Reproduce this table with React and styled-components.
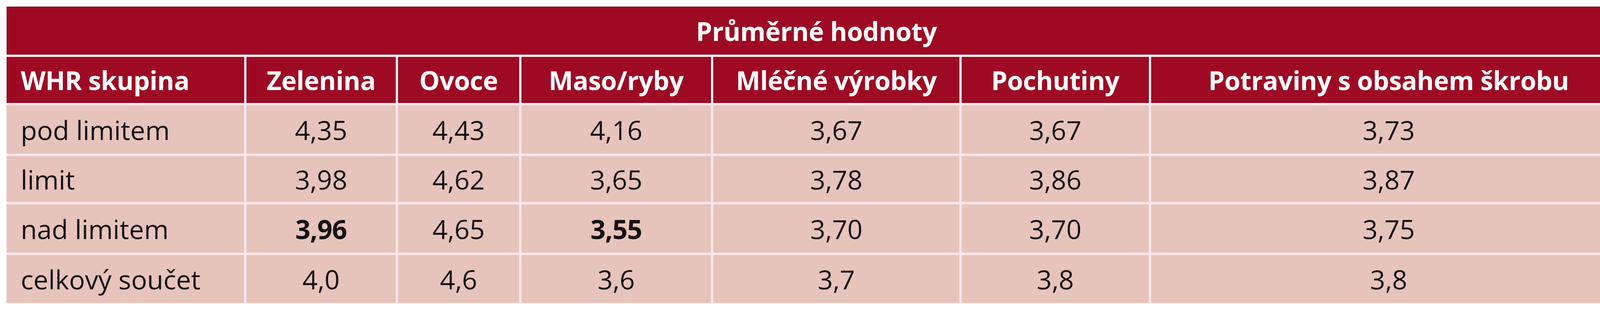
import React from 'react'
import styled, { createGlobalStyle } from 'styled-components'

const GlobalStyle = createGlobalStyle`
  html, body {
    margin: 0;
    padding: 0;
    background: #ffffff;
  }
  body {
    font-family: "Open Sans", "Noto Sans", sans-serif;
  }
`

const columns = [
  'WHR skupina',
  'Zelenina',
  'Ovoce',
  'Maso/ryby',
  'Mléčné výrobky',
  'Pochutiny',
  'Potraviny s obsahem škrobu',
]

// bold = hodnota zvýrazněná v originální tabulce
const rows = [
  ['pod limitem', '4,35', '4,43', '4,16', '3,67', '3,67', '3,73'],
  ['limit', '3,98', '4,62', '3,65', '3,78', '3,86', '3,87'],
  ['nad limitem', { v: '3,96', bold: true }, '4,65', { v: '3,55', bold: true }, '3,70', '3,70', '3,75'],
  ['celkový součet', '4,0', '4,6', '3,6', '3,7', '3,8', '3,8'],
]

const Page = styled.div`
  padding: 16px;
`

const Table = styled.div`
  display: grid;
  grid-template-columns: 608px 382px 310px 485px 630px 479px 1216px;
  grid-template-rows: 123px 118px 124px 118px 124px 123px;
  gap: 6px;
  width: max-content;
  background: #fce6ec;
  border: 1px solid #fbe3ea;
`

const Cell = styled.div`
  display: flex;
  align-items: center;
  justify-content: ${p => (p.$left ? 'flex-start' : 'center')};
  padding: 0 ${p => (p.$left ? '36px' : '0')};
  white-space: nowrap;
  box-sizing: border-box;
`

const TitleCell = styled(Cell)`
  grid-column: 1 / -1;
  background: #9e0a23;
  box-shadow: inset 0 0 0 2px rgba(110, 12, 34, 0.55);
  color: #ffffff;
  font-weight: 700;
  font-size: 66px;
  letter-spacing: -0.5px;
`

const HeadCell = styled(Cell)`
  background: #9e0a23;
  box-shadow: inset 0 0 0 2px rgba(110, 12, 34, 0.55);
  color: #ffffff;
  font-weight: 700;
  font-size: 66px;
  letter-spacing: -0.5px;
`

const DataCell = styled(Cell)`
  background: #e7c4bb;
  color: #141014;
  font-size: 68px;
  font-weight: ${p => (p.$bold ? 700 : 400)};
  letter-spacing: ${p => (p.$bold ? '-1px' : '0')};
`

export default function App() {
  return (
    <>
      <GlobalStyle />
      <Page>
        <Table>
          <TitleCell>Průměrné hodnoty</TitleCell>
          {columns.map((c, i) => (
            <HeadCell key={c} $left={i === 0}>{c}</HeadCell>
          ))}
          {rows.map(row =>
            row.map((val, i) => {
              const v = typeof val === 'string' ? val : val.v
              const bold = typeof val === 'object' && val.bold
              return (
                <DataCell key={row[0] + i} $left={i === 0} $bold={bold}>
                  {v}
                </DataCell>
              )
            })
          )}
        </Table>
      </Page>
    </>
  )
}
